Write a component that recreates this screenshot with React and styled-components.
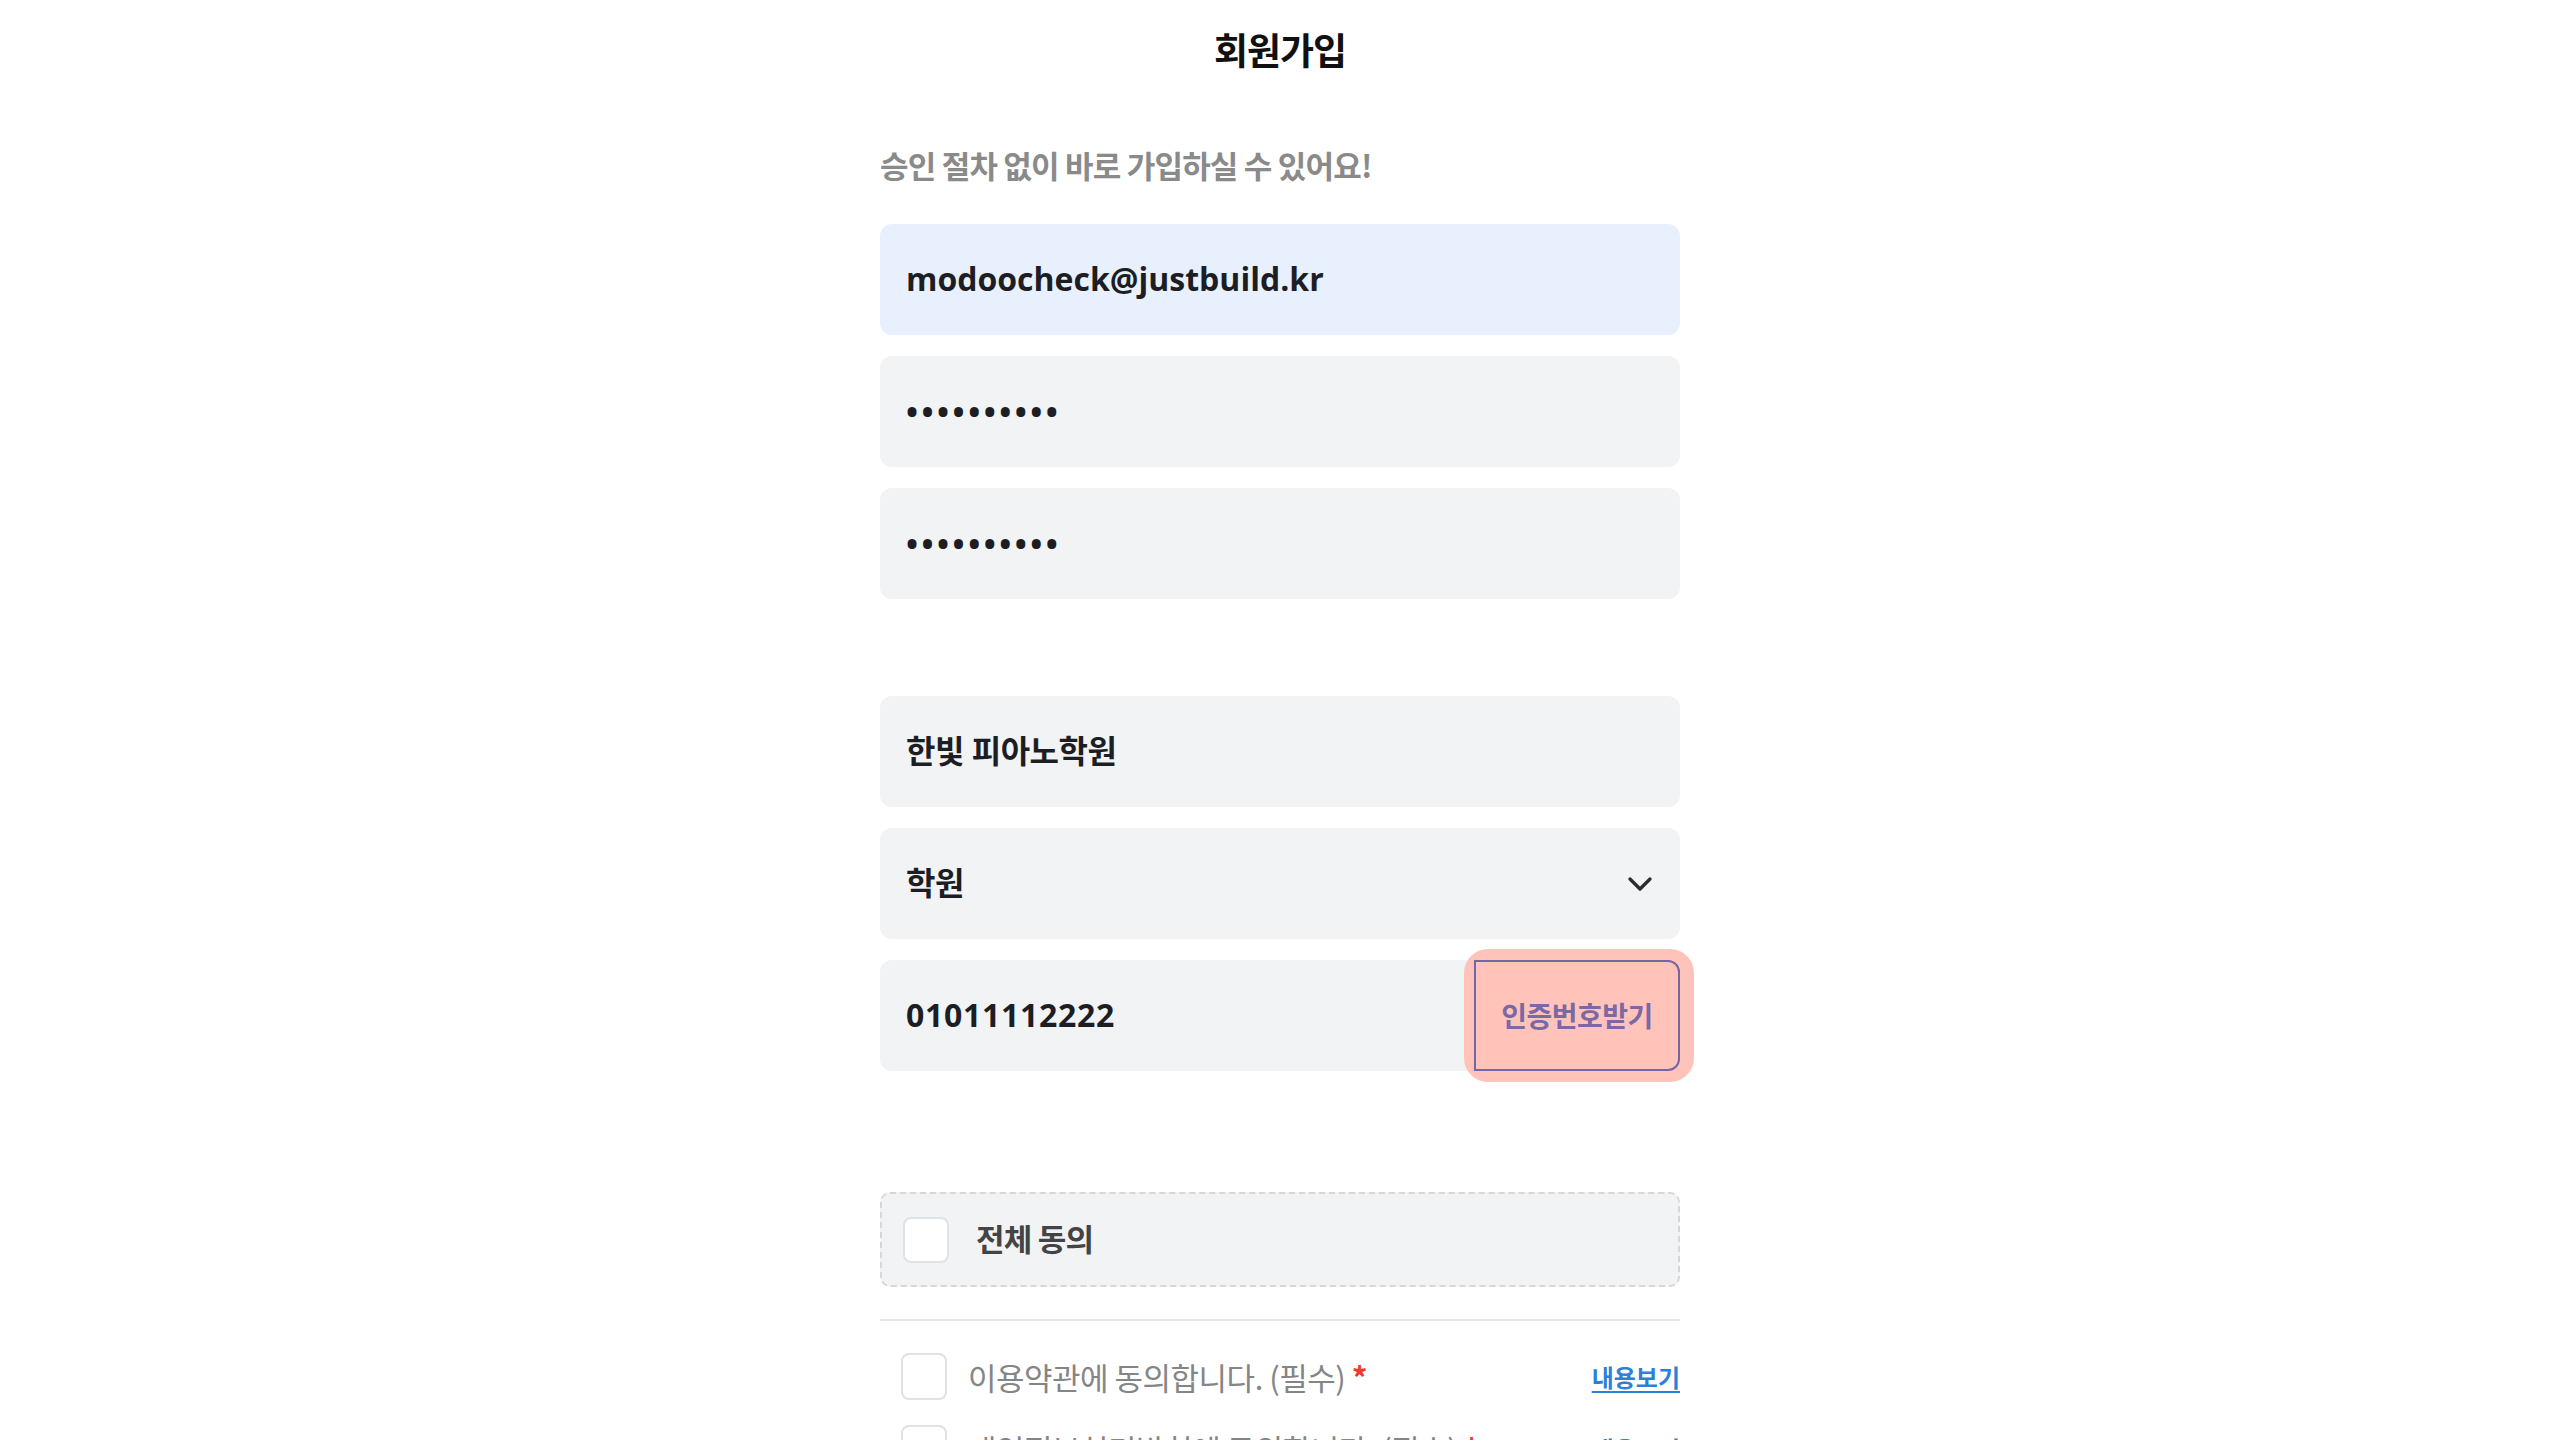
import React from "react";
import styled, { createGlobalStyle } from "styled-components";
import { ChevronDown } from "lucide-react";

const terms = [
  { label: "이용약관에 동의합니다. (필수)" },
  { label: "개인정보처리방침에 동의합니다. (필수)" },
];

function App() {
  return (
    <>
      <GlobalStyle />
      <Page>
        <Title>회원가입</Title>
        <Form>
          <Lead>승인 절차 없이 바로 가입하실 수 있어요!</Lead>

          <Group>
            <Field $autofill>
              <Input type="email" value="modoocheck@justbuild.kr" readOnly />
            </Field>
            <Field>
              <Input type="password" value="abcdefghij" readOnly $secret />
            </Field>
            <Field>
              <Input type="password" value="abcdefghij" readOnly $secret />
            </Field>
          </Group>

          <Group $spaced>
            <Field>
              <Input value="한빛 피아노학원" readOnly $korean />
            </Field>
            <Field $select>
              <SelectValue>학원</SelectValue>
              <ChevronDown size={40} strokeWidth={2} color="#2b2d33" />
            </Field>
            <Field>
              <Input value="01011112222" readOnly $digits />
              <ButtonRing>
                <VerifyButton type="button">인증번호받기</VerifyButton>
              </ButtonRing>
            </Field>
          </Group>

          <AgreeAll>
            <Check />
            <AgreeAllLabel>전체 동의</AgreeAllLabel>
          </AgreeAll>

          <Divider />

          <Terms>
            {terms.map((t) => (
              <TermRow key={t.label}>
                <TermLeft>
                  <Check $small />
                  <TermLabel>
                    {t.label} <Required>*</Required>
                  </TermLabel>
                </TermLeft>
                <ViewLink href="#">내용보기</ViewLink>
              </TermRow>
            ))}
          </Terms>
        </Form>
      </Page>
    </>
  );
}

export default App;

const GlobalStyle = createGlobalStyle`
  body {
    margin: 0;
    background: #ffffff;
    font-family: "Open Sans", "Noto Sans CJK KR", sans-serif;
  }
`;

const Page = styled.div`
  display: flex;
  flex-direction: column;
  align-items: center;
  padding-top: 24px;
`;

const Title = styled.h1`
  margin: 0;
  font-family: "Noto Sans CJK KR", sans-serif;
  font-size: 37px;
  line-height: 50px;
  font-weight: 700;
  letter-spacing: -1px;
  color: #111111;
`;

const Form = styled.div`
  width: 800px;
  margin-top: 71px;
  display: flex;
  flex-direction: column;
`;

const Lead = styled.p`
  margin: 0;
  font-family: "Noto Sans CJK KR", sans-serif;
  font-size: 31px;
  line-height: 40px;
  font-weight: 700;
  letter-spacing: -0.8px;
  color: #8a8a8a;
`;

const Group = styled.div`
  display: flex;
  flex-direction: column;
  gap: 21px;
  margin-top: ${(p) => (p.$spaced ? "97px" : "39px")};
`;

const Field = styled.div`
  display: flex;
  align-items: center;
  height: 111px;
  box-sizing: border-box;
  border-radius: 12px;
  padding-right: ${(p) => (p.$select ? "20px" : "0")};
  background: ${(p) => (p.$autofill ? "#e8f0fe" : "#f2f3f5")};
`;

const Input = styled.input`
  flex: 1;
  min-width: 0;
  height: 100%;
  box-sizing: border-box;
  padding: 0 26px ${(p) => (p.$korean ? "5px" : p.$secret ? "0" : "3px")};
  border: 0;
  outline: none;
  background: transparent;
  font-family: inherit;
  font-size: 32px;
  font-weight: 700;
  color: #1d1e23;
  letter-spacing: ${(p) =>
    p.$korean ? "-0.5px" : p.$secret ? "3.5px" : p.$digits ? "0.7px" : "0"};
`;

const SelectValue = styled.span`
  flex: 1;
  padding: 0 0 5px 26px;
  font-size: 32px;
  font-weight: 700;
  letter-spacing: -0.5px;
  color: #1d1e23;
`;

const ButtonRing = styled.div`
  display: flex;
  align-self: stretch;
  margin: -11px -14px -11px -10px;
  padding: 11px 14px 11px 10px;
  border-radius: 24px;
  background: #ffc3b9;
`;

const VerifyButton = styled.button`
  width: 206px;
  box-sizing: border-box;
  padding-bottom: 3px;
  border: 2px solid #7565a6;
  border-radius: 0 12px 12px 0;
  background: #ffc3b9;
  font-family: "Noto Sans CJK KR", sans-serif;
  font-size: 28px;
  font-weight: 700;
  letter-spacing: -0.5px;
  color: #7a69a5;
  cursor: pointer;
`;

const AgreeAll = styled.div`
  display: flex;
  align-items: center;
  gap: 27px;
  height: 95px;
  box-sizing: border-box;
  margin-top: 121px;
  padding-left: 21px;
  border: 2px dashed #d6d7da;
  border-radius: 10px;
  background: #f2f3f5;
`;

const Check = styled.span`
  display: block;
  width: 46px;
  height: ${(p) => (p.$small ? "47px" : "46px")};
  box-sizing: border-box;
  border: 2px solid #dfe2e6;
  border-radius: 8px;
  background: #ffffff;
  flex-shrink: 0;
`;

const AgreeAllLabel = styled.span`
  padding-bottom: 5px;
  font-family: "Noto Sans CJK KR", sans-serif;
  font-size: 31px;
  font-weight: 700;
  letter-spacing: -0.8px;
  color: #444444;
`;

const Divider = styled.div`
  height: 2px;
  margin-top: 32px;
  background: #e6e7e9;
`;

const Terms = styled.div`
  display: flex;
  flex-direction: column;
  gap: 25px;
  margin-top: 32px;
`;

const TermRow = styled.div`
  display: flex;
  align-items: center;
  justify-content: space-between;
  padding-left: 21px;
`;

const TermLeft = styled.div`
  display: flex;
  align-items: center;
  gap: 21px;
`;

const TermLabel = styled.span`
  font-family: "Noto Sans CJK KR", sans-serif;
  font-size: 31px;
  font-weight: 400;
  letter-spacing: -0.5px;
  color: #858585;
`;

const Required = styled.span`
  font-weight: 700;
  color: #ef3b2d;
`;

const ViewLink = styled.a`
  font-family: "Noto Sans CJK KR", sans-serif;
  font-size: 24px;
  font-weight: 700;
  color: #2f7fd6;
  text-decoration: underline;
  text-underline-offset: 4px;
`;
